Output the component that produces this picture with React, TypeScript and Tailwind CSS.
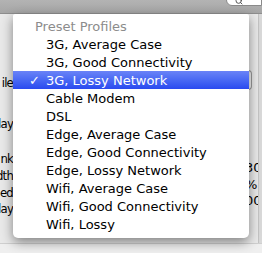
import { Search } from 'lucide-react';

const items = [
    '3G, Average Case',
    '3G, Good Connectivity',
    '3G, Lossy Network',
    'Cable Modem',
    'DSL',
    'Edge, Average Case',
    'Edge, Good Connectivity',
    'Edge, Lossy Network',
    'Wifi, Average Case',
    'Wifi, Good Connectivity',
    'Wifi, Lossy',
];

const selected = '3G, Lossy Network';

export default function App() {
    return (
        <div className="relative w-[262px] h-[253px] overflow-hidden bg-[#e9e9e9] text-[13px] leading-none text-black font-['DejaVu_Sans',sans-serif]">
            {/* Toolbar */}
            <div className="h-[14px] bg-gradient-to-b from-[#b3b3b3] to-[#a6a6a6] border-b border-[#8e8e8e] flex justify-end">
                <div className="w-[36px] h-[7px] -mt-px bg-white rounded-bl-[6px] border border-[#8a8a8a] flex items-end pl-2">
                    <Search size={8} strokeWidth={3} className="text-[#555]" />
                </div>
            </div>

            {/* Window content behind the menu */}
            <div className="flex h-[229px]">
                <div className="w-[13px] flex flex-col items-end text-right whitespace-nowrap tracking-[-0.8px] font-['DejaVu_Sans_Condensed',sans-serif]">
                    <div className="mt-[59px] h-[18px] flex items-center">ile</div>
                    <div className="mt-[23px] h-[18px] flex items-center">lay</div>
                    <div className="mt-[18px] h-[17px] flex items-center">nk</div>
                    <div className="h-[17px] flex items-center">dth</div>
                    <div className="h-[16px] flex items-center">ed</div>
                    <div className="h-[17px] flex items-center">lay</div>
                </div>
                <div className="flex-1" />
                <div className="w-[13px] flex flex-col whitespace-nowrap">
                    <div className="mt-[56px] h-[20px] w-[7px] bg-[#f4f4f4] border border-[#9a9a9a] border-l-0 rounded-r-[4px]" />
                    <div className="mt-[69px] h-[17px] flex items-center">30</div>
                    <div className="h-[16px] flex items-center">%</div>
                    <div className="h-[17px] flex items-center">00</div>
                </div>
                <div className="w-[4px] bg-[#d9d9d9] border-l border-[#c4c4c4]" />
            </div>
            <div className="h-[10px] border-t border-[#cfcfcf] bg-[#efefef]" />

            {/* Popup menu */}
            <div className="absolute left-[13px] top-[14px] w-[236px] pt-[3px] pb-[5px] bg-white rounded-b-[5px] rounded-t-[2px] shadow-[0_4px_12px_rgba(0,0,0,0.45)]">
                <div className="h-[18px] flex items-center pl-[22px] text-[#8c8c8c]">Preset Profiles</div>
                {items.map((item) => {
                    const active = item === selected;
                    return (
                        <div
                            key={item}
                            className={
                                active
                                    ? 'h-[18px] flex items-center bg-gradient-to-b from-[#6a83f7] to-[#2a49ef] text-white'
                                    : 'h-[18px] flex items-center'
                            }
                        >
                            <span className="w-[33px] pl-[16px] font-bold">{active ? '✓' : ''}</span>
                            <span>{item}</span>
                        </div>
                    );
                })}
            </div>
        </div>
    );
}
